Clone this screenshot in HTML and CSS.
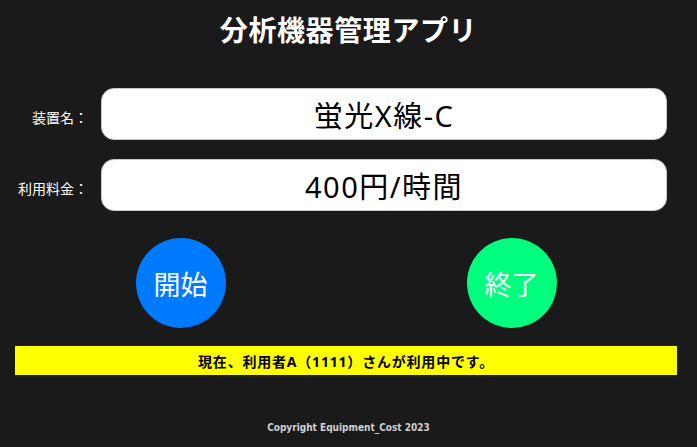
FILE: index.html
```html
<!DOCTYPE html>
<html lang="ja">
<head>
<meta charset="utf-8">
<title>分析機器管理アプリ</title>
<link rel="stylesheet" href="styles.css">
</head>
<body>
<div class="page">
  <h1 class="title">分析機器管理アプリ</h1>
  <div class="form">
    <div class="label">装置名：</div>
    <div class="field">蛍光X線-C</div>
    <div class="label">利用料金：</div>
    <div class="field">400円/時間</div>
  </div>
  <div class="buttons">
    <button class="circle start">開始</button>
    <button class="circle end">終了</button>
  </div>
  <div class="status">現在、利用者A（1111）さんが利用中です。</div>
  <footer class="footer">Copyright Equipment_Cost 2023</footer>
</div>
</body>
</html>
```
FILE: styles.css
```css
html, body {
  margin: 0;
  padding: 0;
  background: #1a1a1a;
  height: 100%;
}
body {
  font-family: "Noto Sans", "Noto Sans CJK JP", sans-serif;
  color: #fff;
}
.page {
  display: flex;
  flex-direction: column;
}
.title {
  margin: 0;
  padding-top: 9px;
  height: 48px;
  text-align: center;
  font-family: "Noto Sans CJK JP", sans-serif;
  font-size: 28px;
  letter-spacing: 0.6px;
  font-weight: 700;
  line-height: 40px;
}
.form {
  margin-top: 31px;
  display: grid;
  grid-template-columns: 80px 1fr;
  column-gap: 13px;
  row-gap: 19px;
  padding: 0 30px 0 8px;
}
.label {
  display: flex;
  align-items: center;
  justify-content: flex-end;
  padding-top: 6px;
  font-family: "Noto Sans CJK JP", sans-serif;
  font-size: 14px;
  white-space: nowrap;
}
.field {
  height: 50px;
  background: #fff;
  border: 1px solid #c8c8c8;
  border-radius: 13px;
  color: #000;
  font-size: 29px;
  letter-spacing: 1.5px;
  display: flex;
  align-items: center;
  justify-content: center;
}
.buttons {
  margin: 27px 20px 0 15px;
  display: flex;
  justify-content: space-around;
}
.circle {
  width: 90px;
  height: 90px;
  border-radius: 50%;
  border: none;
  color: #fff;
  font-family: "Noto Sans CJK JP", sans-serif;
  font-size: 27px;
  padding: 0;
  display: flex;
  align-items: center;
  justify-content: center;
}
.start { background: #007bff; }
.end { background: #00ff7f; }
.status {
  margin: 18px 20px 0 15px;
  height: 29px;
  background: #ffff00;
  color: #000;
  font-weight: 700;
  font-size: 14px;
  letter-spacing: 0.8px;
  display: flex;
  align-items: center;
  justify-content: center;
}
.footer {
  margin-top: 47px;
  text-align: center;
  font-family: "DejaVu Sans Condensed", "DejaVu Sans", sans-serif;
  font-weight: 700;
  font-size: 10px;
  color: #d0d0d0;
}
```
